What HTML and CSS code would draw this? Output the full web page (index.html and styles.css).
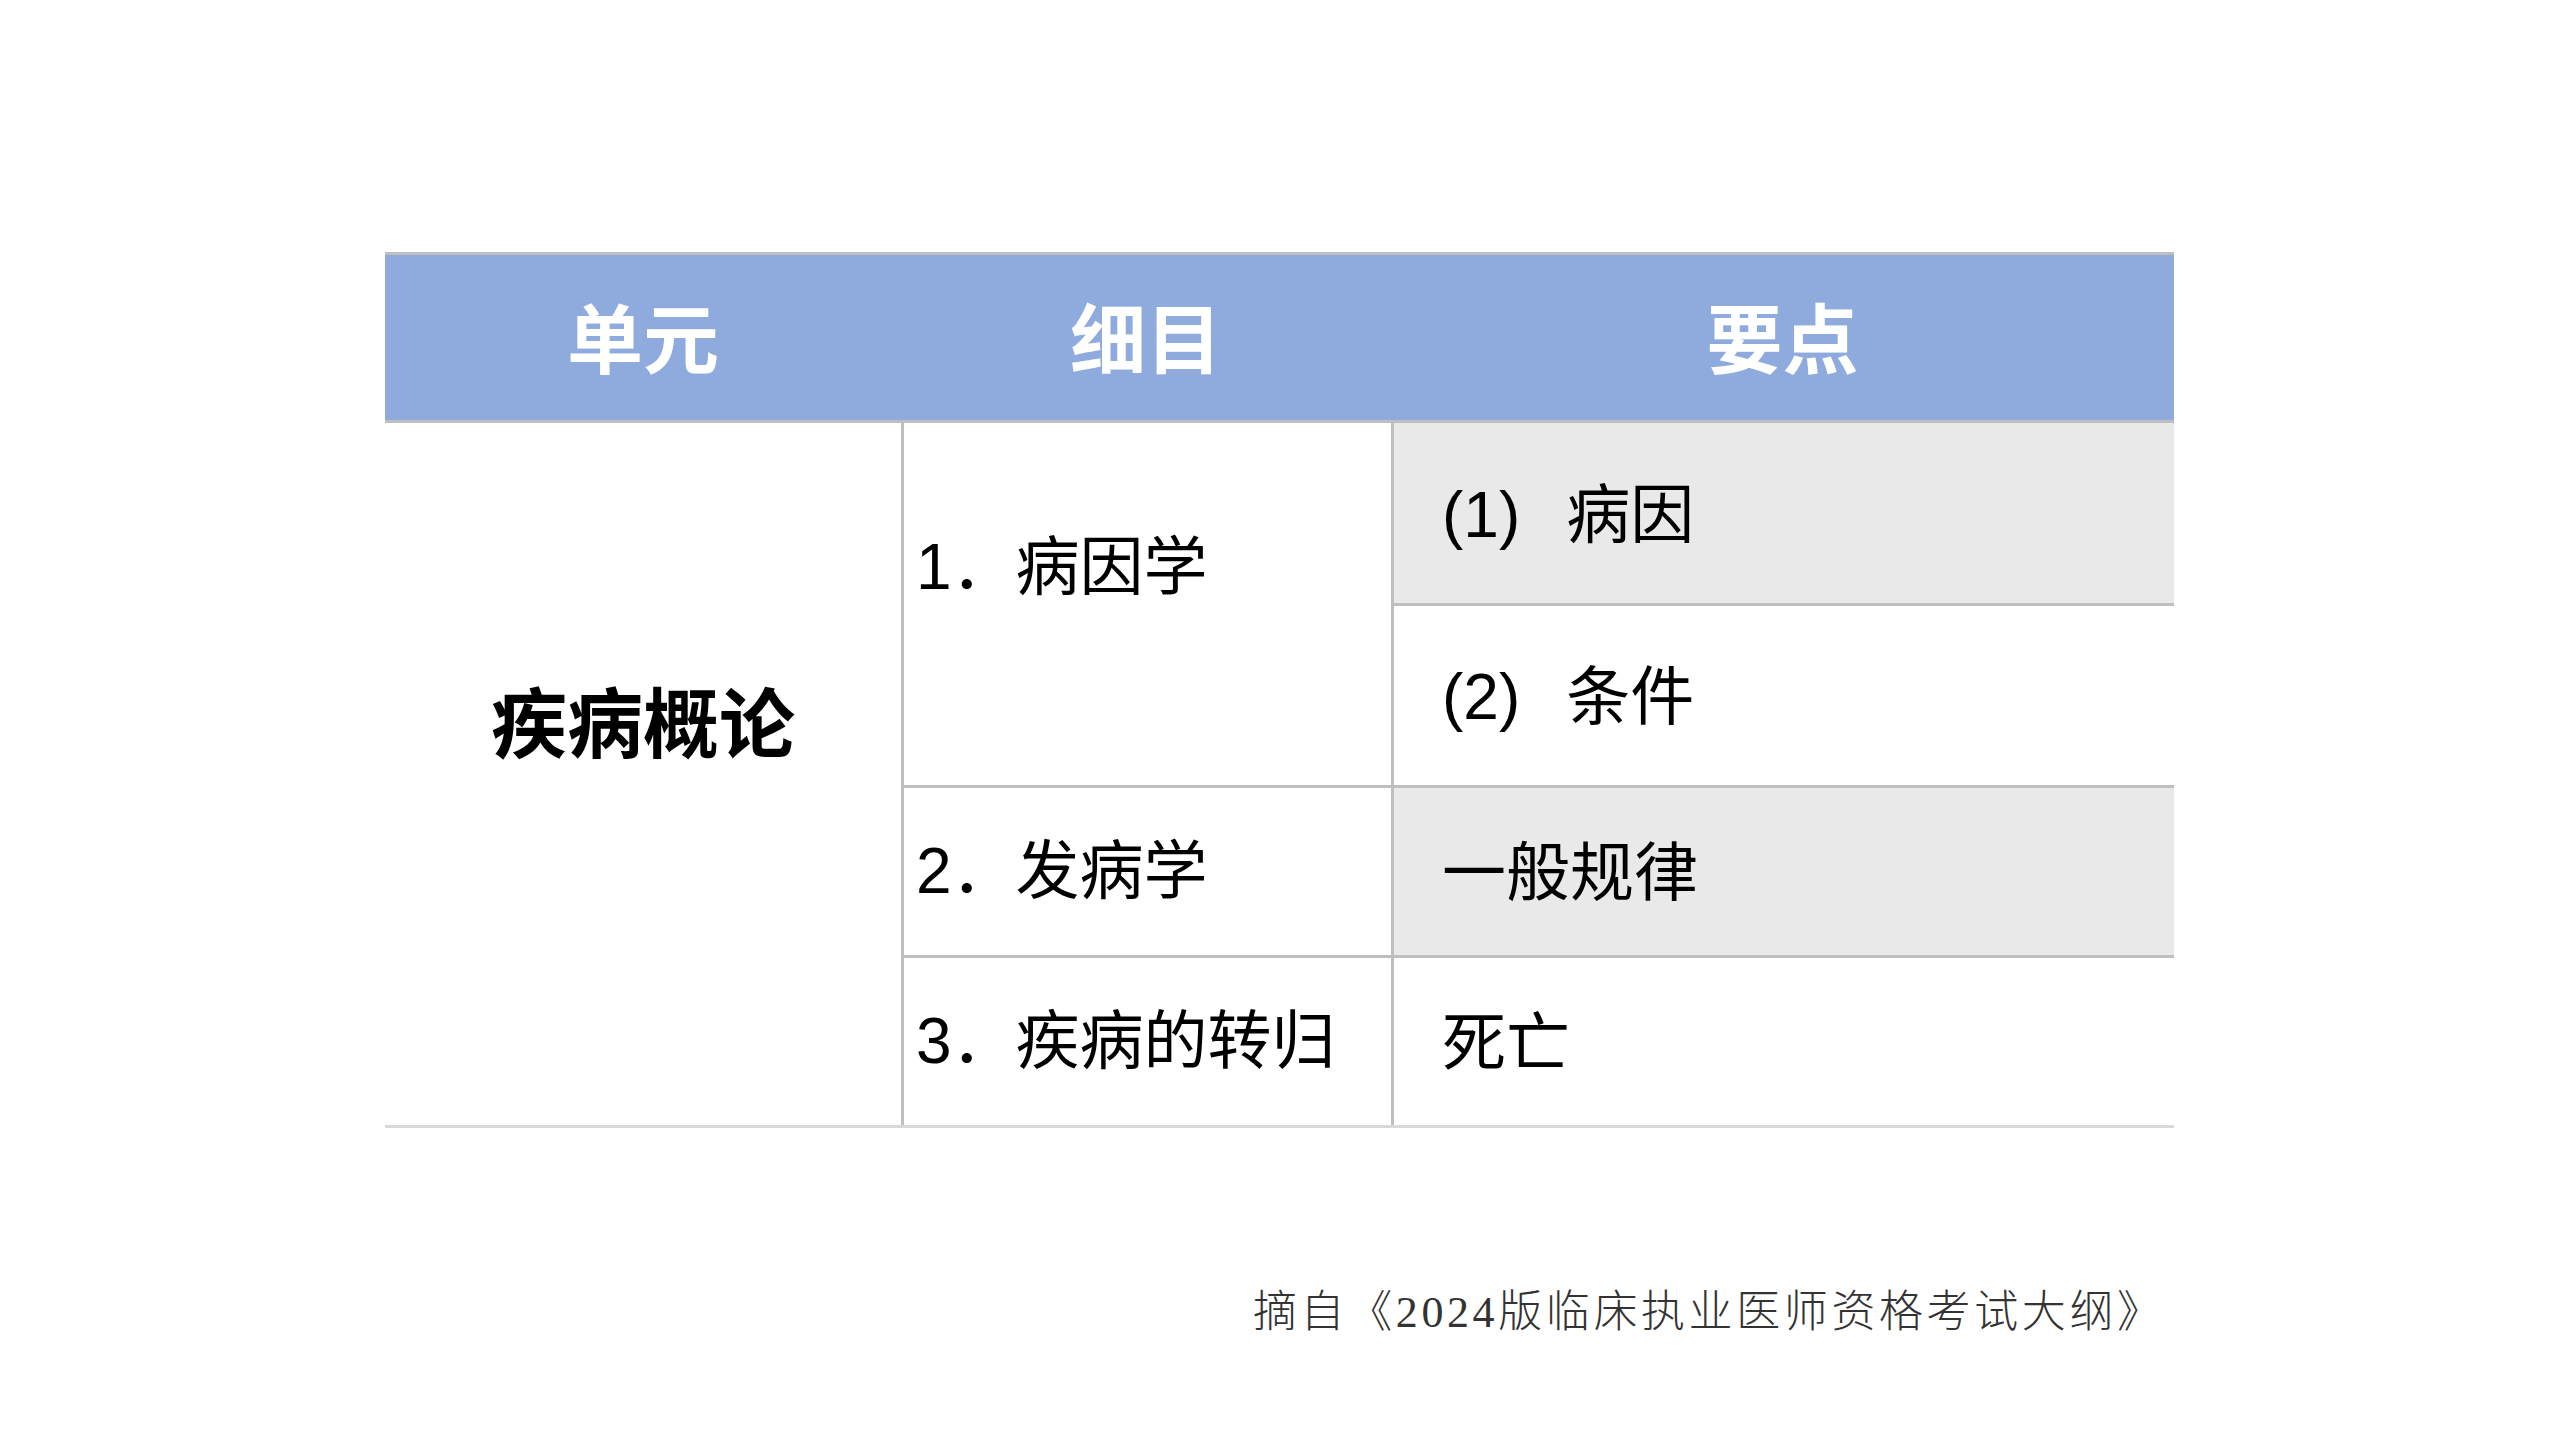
FILE: index.html
```html
<!DOCTYPE html>
<html lang="zh-CN">
<head>
<meta charset="utf-8">
<title>疾病概论</title>
<link rel="stylesheet" href="styles.css">
</head>
<body>
<div class="page">
  <div class="outline">
    <div class="th">单元</div>
    <div class="th">细目</div>
    <div class="th">要点</div>

    <div class="unit span4"><span class="unit-text">疾病概论</span></div>
    <div class="item span2 first"><span><span class="n">1</span>．病因学</span></div>
    <div class="point shaded"><span><span class="paren">(1)</span>病因</span></div>
    <div class="point"><span><span class="paren">(2)</span>条件</span></div>
    <div class="item"><span><span class="n">2</span>．发病学</span></div>
    <div class="point shaded"><span>一般规律</span></div>
    <div class="item last"><span><span class="n">3</span>．疾病的转归</span></div>
    <div class="point last"><span>死亡</span></div>
  </div>
  <p class="source">摘自《2024版临床执业医师资格考试大纲》</p>
</div>
</body>
</html>
```

FILE: styles.css
```css
* { box-sizing: border-box; }

html, body {
  margin: 0;
  padding: 0;
  background: #ffffff;
}

.page {
  width: 2560px;
  height: 1440px;
  padding-top: 252px;
  padding-left: 385px;
  font-family: "Liberation Sans", "Noto Sans CJK SC", sans-serif;
  color: #000000;
}

.outline {
  display: grid;
  grid-template-columns: 516px 490px 783px;
  grid-template-rows: 168px 183px 182px 170px 167px;
  width: 1789px;
  border-top: 3px solid #bfbfbf;
  border-bottom: 3px solid #d9d9d9;
}

.th {
  display: flex;
  align-items: center;
  justify-content: center;
  background: #8faadc;
  border-bottom: 3px solid #bfbfbf;
  color: #ffffff;
  font-family: "Noto Sans CJK SC", sans-serif;
  font-weight: 700;
  font-size: 76px;
  line-height: 1.2;
  padding-bottom: 3px;
}

.span4 { grid-row: span 4; }
.span2 { grid-row: span 2; }

.unit {
  display: flex;
  align-items: center;
  justify-content: center;
  padding-bottom: 108px;
  font-family: "Noto Sans CJK SC", sans-serif;
  font-weight: 700;
  font-size: 76px;
  line-height: 1.2;
}

.item,
.point {
  display: flex;
  align-items: center;
  border-left: 3px solid #bfbfbf;
  border-bottom: 3px solid #bfbfbf;
  font-size: 64px;
  line-height: 1.2;
  white-space: nowrap;
}

.item {
  padding-left: 12px;
}

.item.first {
  padding-bottom: 74px;
}

.point {
  padding-left: 48px;
  padding-top: 4px;
}

.item.last,
.point.last {
  border-bottom: none;
}

.shaded {
  background: #e9e9e9;
}

.paren {
  margin-right: 46px;
}

.source {
  margin: 163px 0 0 0;
  padding-left: 868px;
  font-family: "Liberation Serif", "Noto Sans CJK SC", serif;
  font-weight: 300;
  font-size: 44px;
  line-height: 1;
  letter-spacing: 3.6px;
  color: #333333;
  white-space: nowrap;
}
```
